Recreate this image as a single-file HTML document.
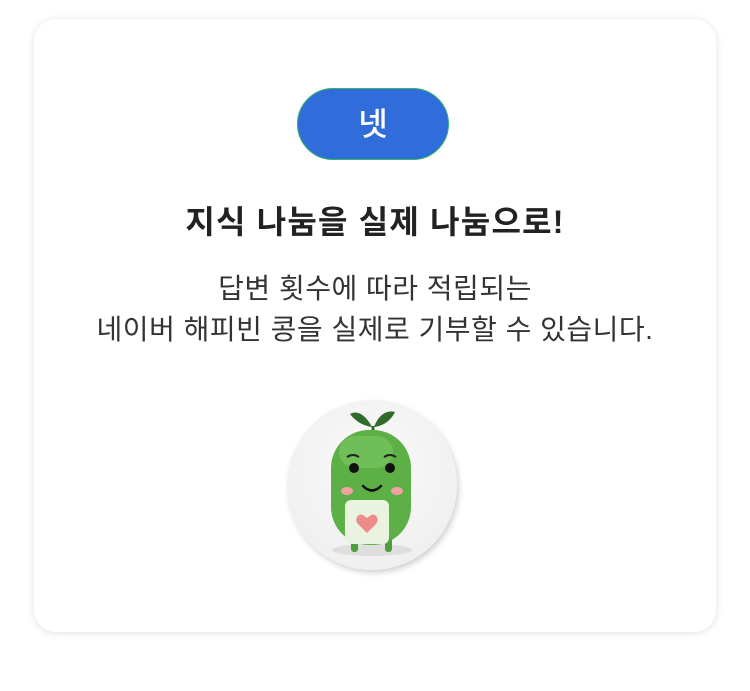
<!DOCTYPE html>
<html><head><meta charset="utf-8"><style>
body{margin:0;width:750px;height:691px;background:#fff;font-family:"Liberation Sans","Noto Sans CJK KR",sans-serif;position:relative;overflow:hidden}
.card{position:absolute;left:34px;top:19px;width:682px;height:613px;border-radius:22px;background:#fff;box-shadow:0 1px 8px rgba(0,0,0,.12)}
.pill{position:absolute;left:297px;top:88px;width:150px;height:70px;border:1px solid #2fb36a;border-radius:36px;background:#306ddb;color:#fff;font-size:32px;line-height:70px;text-align:center;font-weight:500}
.t{position:absolute;left:0;width:750px;text-align:center}
.circ{position:absolute;left:287px;top:400px;width:170px;height:170px;border-radius:50%;background:radial-gradient(circle at 50% 40%,#fafafa,#ececec);box-shadow:2px 3px 6px rgba(0,0,0,.18)}
</style></head><body>
<div class="card"></div>
<div class="pill">넷</div>
<div class="t" style="top:197px;font-size:32px;font-weight:bold;color:#222;letter-spacing:1.2px">지식 나눔을 실제 나눔으로!</div>
<div class="t" style="top:268px;font-size:28px;color:#333;letter-spacing:0.5px;line-height:41px">답변 횟수에 따라 적립되는<br>네이버 해피빈 콩을 실제로 기부할 수 있습니다.</div>
<div class="circ"></div>
<svg style="position:absolute;left:287px;top:400px" width="170" height="170" viewBox="0 0 170 170">
<ellipse cx="85" cy="150" rx="40" ry="6" fill="#000" opacity=".08"/>
<path d="M85 27 C78 14 70 10 63 14 C69 22 77 26 85 27Z" fill="#2f6b2a"/>
<path d="M87 27 C92 14 100 10 108 12 C103 22 95 26 87 27Z" fill="#2f6b2a"/>
<path d="M86 26 L86 34" stroke="#2f6b2a" stroke-width="3"/>
<rect x="44" y="30" width="80" height="115" rx="38" fill="#5cb046"/>
<rect x="52" y="36" width="54" height="32" rx="16" fill="#7cc862" opacity=".6"/>
<rect x="64" y="138" width="7" height="14" rx="3" fill="#4fa03c"/>
<rect x="98" y="138" width="7" height="14" rx="3" fill="#4fa03c"/>
<circle cx="67" cy="68" r="5" fill="#111"/><circle cx="103" cy="68" r="5" fill="#111"/>
<path d="M60 57 Q66 53 72 57 M97 57 Q103 53 109 57" stroke="#222" stroke-width="2" fill="none"/>
<ellipse cx="60" cy="91" rx="6" ry="4" fill="#f3a1a0"/><ellipse cx="110" cy="91" rx="6" ry="4" fill="#f3a1a0"/>
<path d="M76 86 Q85 95 94 86" stroke="#111" stroke-width="2.5" fill="none" stroke-linecap="round"/>
<rect x="58" y="100" width="44" height="44" rx="6" fill="#e9f3e0"/>
<path d="M80 133 L71 124 C67 119 71 113 76 115 L80 118 L84 115 C89 113 93 119 89 124Z" fill="#ef8a8a"/>
</svg>
</body></html>
